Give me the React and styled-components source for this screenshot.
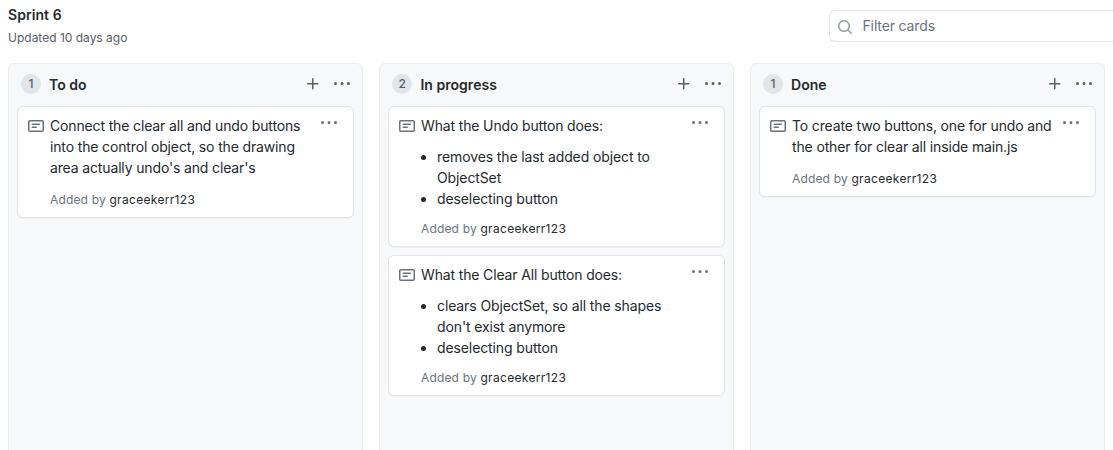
import React from "react";
import styled, { createGlobalStyle } from "styled-components";

const GlobalStyle = createGlobalStyle`
  * { box-sizing: border-box; }
  body {
    margin: 0;
    background: #fff;
    color: #24292e;
    font: 14px/21px Inter, "Liberation Sans", sans-serif;
    overflow: hidden;
  }
`;

const Page = styled.div`
  height: 450px;
  display: flex;
  flex-direction: column;
  overflow: hidden;
`;

const Header = styled.header`
  height: 63px;
  flex: none;
  display: flex;
  justify-content: space-between;
  padding-left: 8px;
`;

const Heading = styled.div`
  padding-top: 4px;
`;

const Title = styled.h1`
  margin: 0;
  font-size: 14px;
  line-height: 21px;
  font-weight: 600;
  letter-spacing: 0.06px;
`;

const Updated = styled.p`
  margin: 4px 0 0;
  font-size: 12px;
  line-height: 18px;
  color: #586069;
`;

const Filter = styled.label`
  width: 284px;
  height: 32px;
  margin-top: 10px;
  padding-left: 7px;
  display: flex;
  align-items: center;
  gap: 9.5px;
  border: 1px solid #e1e4e8;
  border-right: 0;
  border-radius: 6px 0 0 6px;
  color: #959da5;

  svg { position: relative; top: 1px; }
`;

const FilterInput = styled.input`
  flex: 1;
  min-width: 0;
  border: 0;
  padding: 0 0 2px;
  outline: 0;
  background: transparent;
  font: inherit;
  letter-spacing: -0.14px;
  &::placeholder { color: #6a737d; opacity: 1; }
`;

const Board = styled.main`
  flex: none;
  display: flex;
  gap: 16px;
  padding: 0 8px;
`;

const Column = styled.section`
  width: 355px;
  height: 420px;
  flex: none;
  padding: 0 8px;
  background: #f6f8fa;
  border: 1px solid #eaecef;
  border-radius: 6px;
`;

const ColumnHeader = styled.div`
  height: 42px;
  display: flex;
  align-items: flex-start;
  padding: 10px 4px 0 4px;
`;

const Counter = styled.span`
  min-width: 20px;
  height: 20px;
  padding: 0 6.5px;
  border-radius: 10px;
  background: #e1e4e8;
  color: #586069;
  font-size: 12px;
  line-height: 19px;
  font-weight: 500;
  text-align: center;
`;

const ColumnTitle = styled.h2`
  margin: 0 0 0 8px;
  flex: 1;
  font-size: 14px;
  line-height: 21px;
  font-weight: 600;
  letter-spacing: 0.03px;
`;

const Actions = styled.div`
  display: flex;
  gap: 13px;
  padding-top: 2px;
  color: #586069;
`;

const CardList = styled.div`
  display: flex;
  flex-direction: column;
  gap: 8px;
`;

const CardBox = styled.article`
  height: ${(p) => p.$height}px;
  display: flex;
  padding: 8px 16px 0 10px;
  background: #fff;
  border: 1px solid #e1e4e8;
  border-radius: 6px;
  box-shadow: 0 1px 0 rgba(27, 31, 35, 0.04);
`;

const NoteSlot = styled.span`
  width: 22px;
  flex: none;
  padding-top: 3px;
  color: #6a737d;
`;

const CardBody = styled.div`
  width: 262px;
  flex: none;
  letter-spacing: -0.145px;
`;

const Text = styled.p`
  margin: 0;
`;

const Bullets = styled.ul`
  margin: 10px 0 0;
  padding-left: 16px;
  letter-spacing: -0.11px;
`;

const Byline = styled.p`
  margin: ${(p) => p.$gap}px 0 0;
  font-size: 12px;
  line-height: 18px;
  letter-spacing: 0.16px;
  color: #6a737d;
  b { font-weight: 400; letter-spacing: 0.32px; color: #24292e; }
`;

const MenuSlot = styled.span`
  margin-left: auto;
  color: #6a737d;
`;

const Svg = styled.svg`
  display: block;
  flex: none;
  fill: currentColor;
`;

const PATHS = {
  note: "M0 3.75C0 2.784.784 2 1.75 2h12.5c.966 0 1.75.784 1.75 1.75v8.5A1.75 1.75 0 0114.25 14H1.75A1.75 1.75 0 010 12.25v-8.5zm1.75-.25a.25.25 0 00-.25.25v8.5c0 .138.112.25.25.25h12.5a.25.25 0 00.25-.25v-8.5a.25.25 0 00-.25-.25H1.75zM3.5 6.25a.75.75 0 01.75-.75h7a.75.75 0 010 1.5h-7a.75.75 0 01-.75-.75zm.75 2.25a.75.75 0 000 1.5h4a.75.75 0 000-1.5h-4z",
  plus: "M7.75 2a.75.75 0 01.75.75V7h4.25a.75.75 0 110 1.5H8.5v4.25a.75.75 0 11-1.5 0V8.5H2.75a.75.75 0 010-1.5H7V2.75A.75.75 0 017.75 2z",
  dots: "M8 9a1.5 1.5 0 100-3 1.5 1.5 0 000 3zM1.5 9a1.5 1.5 0 100-3 1.5 1.5 0 000 3zm13 0a1.5 1.5 0 100-3 1.5 1.5 0 000 3z",
  search: "M11.5 7a4.499 4.499 0 11-8.998 0A4.499 4.499 0 0111.5 7zm-.82 4.74a6 6 0 111.06-1.06l3.04 3.04a.75.75 0 11-1.06 1.06l-3.04-3.04z",
};

const Icon = ({ name }) => (
  <Svg width="16" height="16" viewBox="0 0 16 16" aria-hidden="true">
    <path fillRule="evenodd" d={PATHS[name]} />
  </Svg>
);

const columns = [
  {
    title: "To do",
    cards: [
      { height: 112, text: "Connect the clear all and undo buttons into the control object, so the drawing area actually undo's and clear's" },
    ],
  },
  {
    title: "In progress",
    cards: [
      { height: 141, text: "What the Undo button does:", items: ["removes the last added object to ObjectSet", "deselecting button"] },
      { height: 141, text: "What the Clear All button does:", items: ["clears ObjectSet, so all the shapes don't exist anymore", "deselecting button"] },
    ],
  },
  {
    title: "Done",
    cards: [
      { height: 91, text: "To create two buttons, one for undo and the other for clear all inside main.js" },
    ],
  },
];

const Card = ({ height, text, items }) => (
  <CardBox $height={height}>
    <NoteSlot><Icon name="note" /></NoteSlot>
    <CardBody>
      <Text>{text}</Text>
      {items && <Bullets>{items.map((item) => <li key={item}>{item}</li>)}</Bullets>}
      <Byline $gap={items ? 11 : 13}>Added by <b>graceekerr123</b></Byline>
    </CardBody>
    <MenuSlot><Icon name="dots" /></MenuSlot>
  </CardBox>
);

export default function App() {
  return (
    <Page>
      <GlobalStyle />
      <Header>
        <Heading>
          <Title>Sprint 6</Title>
          <Updated>Updated 10 days ago</Updated>
        </Heading>
        <Filter>
          <Icon name="search" />
          <FilterInput placeholder="Filter cards" />
        </Filter>
      </Header>
      <Board>
        {columns.map(({ title, cards }) => (
          <Column key={title}>
            <ColumnHeader>
              <Counter>{cards.length}</Counter>
              <ColumnTitle>{title}</ColumnTitle>
              <Actions>
                <Icon name="plus" />
                <Icon name="dots" />
              </Actions>
            </ColumnHeader>
            <CardList>
              {cards.map((card) => <Card key={card.text} {...card} />)}
            </CardList>
          </Column>
        ))}
      </Board>
    </Page>
  );
}
